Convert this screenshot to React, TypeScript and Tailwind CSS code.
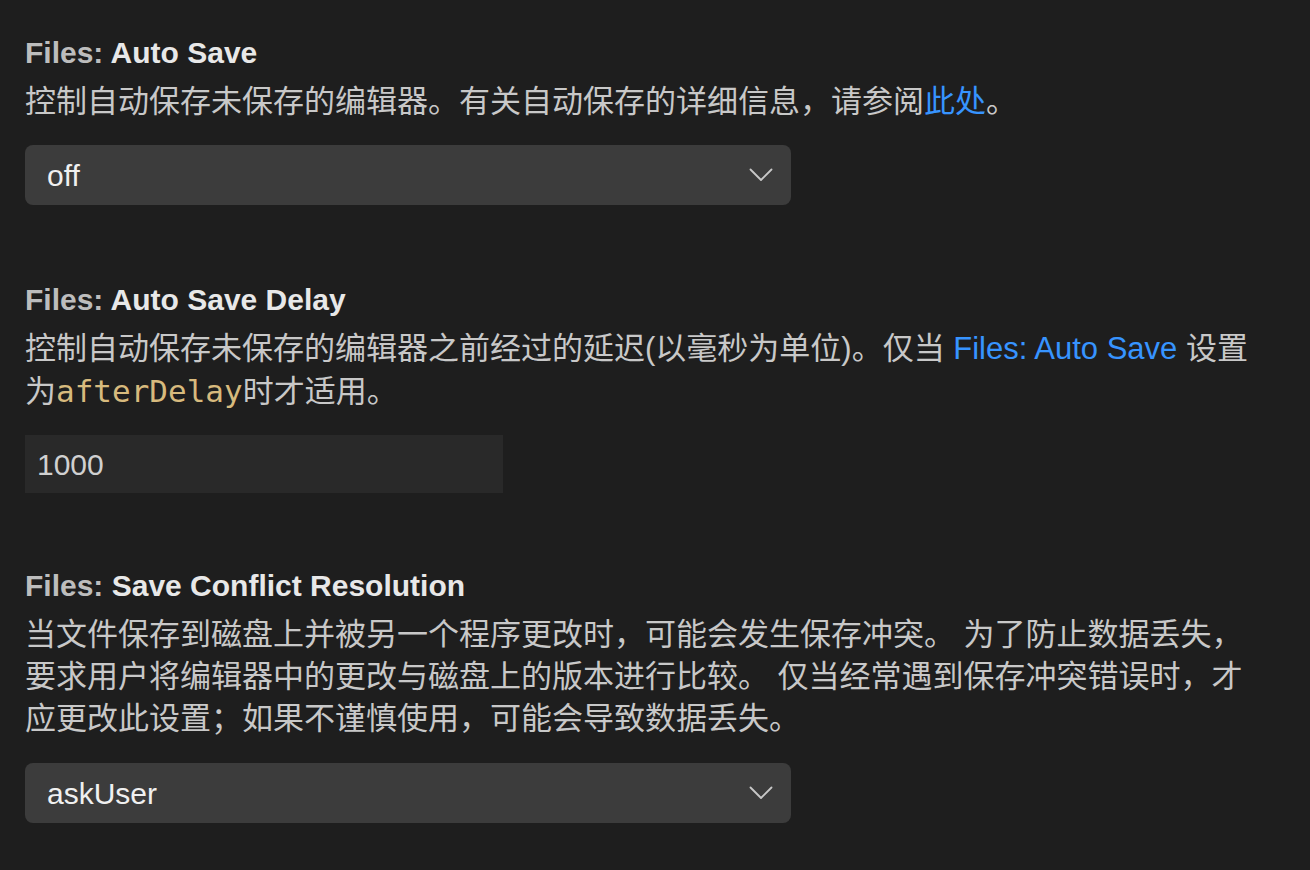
const SANS = { fontFamily: '"Liberation Sans", "Noto Sans CJK SC", sans-serif' }

function Title({ name }: { name: string }) {
  return (
    <h2 className="text-[30px] leading-[42px] font-bold">
      <span className="text-[#bdbdbd]">Files: </span>
      <span className="text-[#e8e8e8]">{name}</span>
    </h2>
  )
}

function Chevron() {
  return (
    <svg width="24" height="14" viewBox="0 0 24 14" fill="none" stroke="#c8c8c8" strokeWidth="1.8">
      <polyline points="1.5,1.5 12,12 22.5,1.5" strokeLinecap="round" strokeLinejoin="round" />
    </svg>
  )
}

function Select({ value }: { value: string }) {
  return (
    <div className="flex h-[60px] w-[766px] items-center justify-between rounded-[8px] bg-[#3c3c3c] pl-[22px] pr-[18px]">
      <span className="text-[30px] text-[#f0f0f0]">{value}</span>
      <Chevron />
    </div>
  )
}

export default function App() {
  return (
    <div className="min-h-[870px] w-[1310px] bg-[#1e1e1e] pl-[25px] pr-[40px] pt-[32px]" style={SANS}>
      <section>
        <Title name="Auto Save" />
        <p className="mt-[7px] text-[31px] leading-[42px] text-[#c8c8c8]">
          控制自动保存未保存的编辑器。有关自动保存的详细信息，请参阅<span className="text-[#3794ff]">此处</span>。
        </p>
        <div className="mt-[22px]">
          <Select value="off" />
        </div>
      </section>

      <section className="mt-[74px]">
        <Title name="Auto Save Delay" />
        <p className="mt-[7px] text-[31px] leading-[42px] text-[#c8c8c8]">
          控制自动保存未保存的编辑器之前经过的延迟(以毫秒为单位)。仅当{' '}
          <span className="text-[#3794ff]">Files: Auto Save</span> 设置为
          <code className="font-['DejaVu_Sans_Mono','Liberation_Mono',monospace] text-[#d7ba7d]">afterDelay</code>
          时才适用。
        </p>
        <div className="mt-[22px] flex h-[58px] w-[478px] items-center bg-[#292929] px-[12px]">
          <span className="text-[30px] text-[#d0d0d0]">1000</span>
        </div>
      </section>

      <section className="mt-[72px]">
        <Title name="Save Conflict Resolution" />
        <p className="mt-[7px] text-[31px] leading-[42px] text-[#c8c8c8]">
          当文件保存到磁盘上并被另一个程序更改时，可能会发生保存冲突。 为了防止数据丢失，要求用户将编辑器中的更改与磁盘上的版本进行比较。 仅当经常遇到保存冲突错误时，才应更改此设置；如果不谨慎使用，可能会导致数据丢失。
        </p>
        <div className="mt-[23px]">
          <Select value="askUser" />
        </div>
      </section>
    </div>
  )
}
